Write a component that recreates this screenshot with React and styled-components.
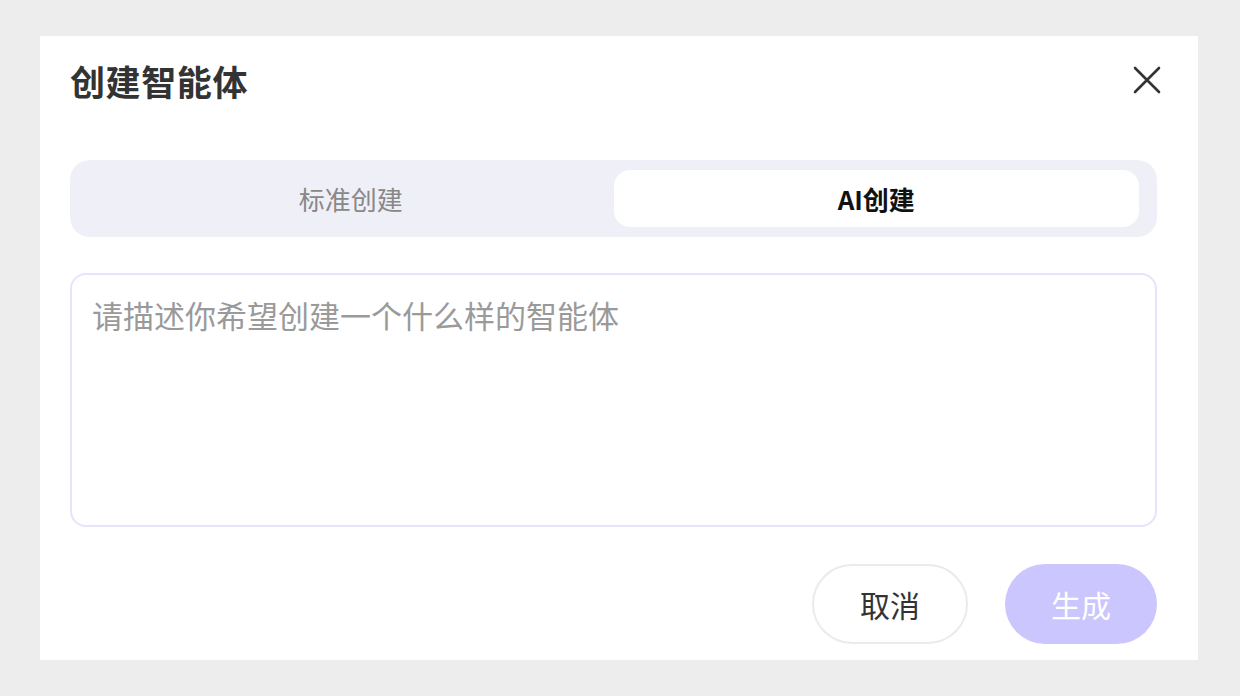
import React, { useState } from 'react';
import styled, { createGlobalStyle } from 'styled-components';

const GlobalStyle = createGlobalStyle`
  html, body {
    margin: 0;
    padding: 0;
    background: #ededed;
    font-family: "Noto Sans CJK SC", "Noto Sans", sans-serif;
  }
`;

const Page = styled.div`
  width: 1240px;
  height: 696px;
  box-sizing: border-box;
  padding: 36px 42px 36px 40px;
`;

const Dialog = styled.div`
  background: #ffffff;
  height: 100%;
  box-sizing: border-box;
  padding: 0 41px 0 30px;
  display: flex;
  flex-direction: column;
  overflow: hidden;
`;

const Header = styled.div`
  height: 88px;
  display: flex;
  align-items: center;
  justify-content: space-between;
`;

const Title = styled.h2`
  margin: 0;
  font-size: 35px;
  font-weight: 700;
  color: #333333;
  letter-spacing: 0.6px;
`;

const CloseButton = styled.button`
  border: none;
  background: none;
  padding: 0;
  margin-right: -6px;
  width: 32px;
  height: 32px;
  display: flex;
  align-items: center;
  justify-content: center;
  cursor: pointer;
`;

const TabBar = styled.div`
  margin-top: 36px;
  height: 77px;
  box-sizing: border-box;
  padding: 10px 18px;
  background: #efeff8;
  border-radius: 20px;
  display: grid;
  grid-template-columns: 1fr 1fr;
`;

const Tab = styled.button`
  border: none;
  border-radius: 16px;
  font-family: inherit;
  font-size: 26px;
  cursor: pointer;
  background: ${(p) => (p.$active ? '#ffffff' : 'transparent')};
  color: ${(p) => (p.$active ? '#111111' : '#888888')};
  font-weight: ${(p) => (p.$active ? 700 : 400)};
`;

const Prompt = styled.textarea`
  margin-top: 36px;
  height: 254px;
  box-sizing: border-box;
  border: 2px solid #e7e3fb;
  border-radius: 16px;
  padding: 17px 20px;
  resize: none;
  outline: none;
  font-family: inherit;
  font-size: 31px;
  line-height: 1.5;
  color: #333333;

  &::placeholder {
    color: #9a9a9a;
  }
`;

const Footer = styled.div`
  margin-top: 37px;
  display: flex;
  justify-content: flex-end;
  gap: 37px;
`;

const PillButton = styled.button`
  height: 80px;
  width: ${(p) => p.$width}px;
  box-sizing: border-box;
  border-radius: 40px;
  font-family: inherit;
  font-size: 30px;
  cursor: pointer;
  border: ${(p) => (p.$primary ? 'none' : '2px solid #ebebeb')};
  background: ${(p) => (p.$primary ? '#cbc6fd' : '#ffffff')};
  color: ${(p) => (p.$primary ? '#ffffff' : '#333333')};
`;

const CloseIcon = () => (
  <svg width="28" height="28" viewBox="0 0 28 28" fill="none">
    <path d="M2 2L26 26M26 2L2 26" stroke="#333" strokeWidth="2.6" strokeLinecap="round" />
  </svg>
);

export default function App() {
  const [mode, setMode] = useState('ai');
  return (
    <>
      <GlobalStyle />
      <Page>
        <Dialog>
          <Header>
            <Title>创建智能体</Title>
            <CloseButton aria-label="关闭">
              <CloseIcon />
            </CloseButton>
          </Header>
          <TabBar>
            <Tab $active={mode === 'standard'} onClick={() => setMode('standard')}>标准创建</Tab>
            <Tab $active={mode === 'ai'} onClick={() => setMode('ai')}>AI创建</Tab>
          </TabBar>
          <Prompt placeholder="请描述你希望创建一个什么样的智能体" />
          <Footer>
            <PillButton $width={156}>取消</PillButton>
            <PillButton $primary $width={152}>生成</PillButton>
          </Footer>
        </Dialog>
      </Page>
    </>
  );
}
